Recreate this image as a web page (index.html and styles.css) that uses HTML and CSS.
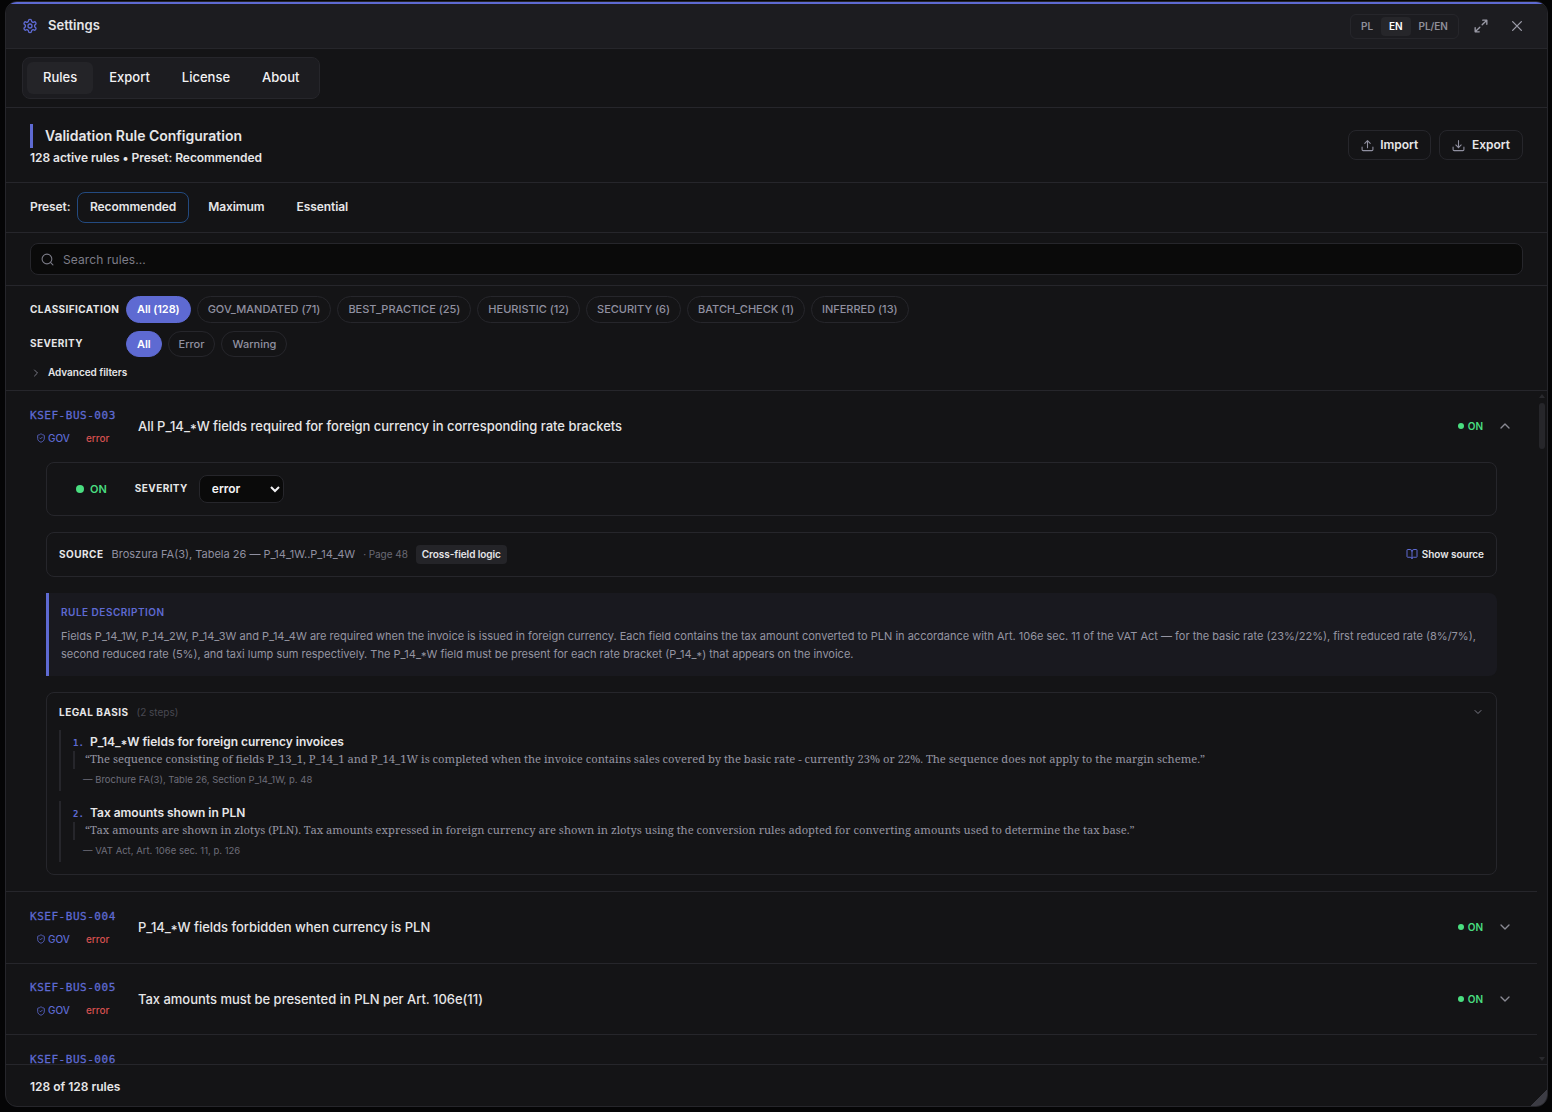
FILE: index.html
```html
<!DOCTYPE html>
<html lang="en">
<head>
    <meta charset="UTF-8">
    <meta name="viewport" content="width=device-width, initial-scale=1.0">
    <title>Settings</title>
    <link rel="stylesheet" href="styles.css">
</head>
<body>
<svg class="sprite" aria-hidden="true">
    <symbol id="shield" viewBox="0 0 24 24">
        <path d="M20 13c0 5-3.500 7.500-7.700 9a1 1 0 0 1-.7 0C7.500 20.500 4 18 4 13V6a1 1 0 0 1 1-1c2 0 4.500-1.200 6.200-2.700a1.200 1.200 0 0 1 1.500 0C14.500 3.800 17 5 19 5a1 1 0 0 1 1 1z"/>
        <path d="m9 12 2 2 4-4"/>
    </symbol>
    <symbol id="chevron" viewBox="0 0 24 24">
        <path d="m6 9 6 6 6-6"/>
    </symbol>
</svg>

<div class="window">
    <div class="header">
        <svg class="icon gear" viewBox="0 0 24 24">
            <path d="M12.220 2h-.44a2 2 0 0 0-2 2v.18a2 2 0 0 1-1 1.730l-.43.25a2 2 0 0 1-2 0l-.15-.08a2 2 0 0 0-2.730.730l-.22.38a2 2 0 0 0 .73 2.730l.15.1a2 2 0 0 1 1 1.720v.51a2 2 0 0 1-1 1.740l-.15.09a2 2 0 0 0-.73 2.730l.22.38a2 2 0 0 0 2.730.730l.15-.08a2 2 0 0 1 2 0l.43.25a2 2 0 0 1 1 1.730V20a2 2 0 0 0 2 2h.44a2 2 0 0 0 2-2v-.18a2 2 0 0 1 1-1.730l.43-.25a2 2 0 0 1 2 0l.15.08a2 2 0 0 0 2.730-.73l.22-.39a2 2 0 0 0-.73-2.730l-.15-.08a2 2 0 0 1-1-1.740v-.5a2 2 0 0 1 1-1.740l.15-.09a2 2 0 0 0 .73-2.730l-.22-.38a2 2 0 0 0-2.730-.73l-.15.08a2 2 0 0 1-2 0l-.43-.25a2 2 0 0 1-1-1.730V4a2 2 0 0 0-2-2z"/>
            <circle cx="12" cy="12" r="3"/>
        </svg>
        <h1>Settings</h1>
        <div class="lang-switch">
            <button>PL</button>
            <button class="active">EN</button>
            <button>PL/EN</button>
        </div>
        <button class="icon-btn" aria-label="Maximize">
            <svg class="icon" viewBox="0 0 24 24"><path d="M15 2h7v7M22 2l-8 8M9 22H2v-7M2 22l8-8"/></svg>
        </button>
        <button class="icon-btn" aria-label="Close">
            <svg class="icon" viewBox="0 0 24 24"><path d="M4.500 4.500l15 15M19.500 4.500l-15 15"/></svg>
        </button>
    </div>

    <div class="tabs-bar">
        <div class="tabs">
            <button class="active">Rules</button>
            <button>Export</button>
            <button>License</button>
            <button>About</button>
        </div>
    </div>

    <div class="config-header">
        <div class="config-title">
            <h2>Validation Rule Configuration</h2>
            <p>128 active rules • Preset: Recommended</p>
        </div>
        <button class="action-btn">
            <svg class="icon" viewBox="0 0 24 24"><path d="M2 15v4.500a2 2 0 0 0 2 2h16a2 2 0 0 0 2-2V15M12 16V3M7 8l5-5 5 5"/></svg>
            Import
        </button>
        <button class="action-btn">
            <svg class="icon" viewBox="0 0 24 24"><path d="M2 15v4.500a2 2 0 0 0 2 2h16a2 2 0 0 0 2-2V15M12 3v13M7 11l5 5 5-5"/></svg>
            Export
        </button>
    </div>

    <div class="preset-bar">
        <span>Preset:</span>
        <button class="active">Recommended</button>
        <button>Maximum</button>
        <button>Essential</button>
    </div>

    <div class="search-bar">
        <label class="search-box">
            <svg class="icon" viewBox="0 0 24 24"><circle cx="11" cy="11" r="9"/><path d="m22 22-4.500-4.500"/></svg>
            <input type="text" placeholder="Search rules...">
        </label>
    </div>

    <div class="filters">
        <div class="filter-row">
            <span class="label">CLASSIFICATION</span>
            <button class="pill active">All (128)</button>
            <button class="pill">GOV_MANDATED (71)</button>
            <button class="pill">BEST_PRACTICE (25)</button>
            <button class="pill">HEURISTIC (12)</button>
            <button class="pill">SECURITY (6)</button>
            <button class="pill">BATCH_CHECK (1)</button>
            <button class="pill">INFERRED (13)</button>
        </div>
        <div class="filter-row severity">
            <span class="label">SEVERITY</span>
            <button class="pill active">All</button>
            <button class="pill">Error</button>
            <button class="pill">Warning</button>
        </div>
        <div class="advanced">
            <svg class="icon" viewBox="0 0 24 24"><path d="m9 6 6 6-6 6"/></svg>
            Advanced filters
        </div>
    </div>

    <div class="list-wrap">
        <div class="rule-list">
            <div class="rule">
                <div class="rule-head">
                    <div class="rule-meta">
                        <div class="rule-id">KSEF-BUS-003</div>
                        <div class="badges"><svg class="icon"><use href="#shield"/></svg><span class="gov">GOV</span><span class="error">error</span></div>
                    </div>
                    <div class="rule-title">All P_14_<span class="star">*</span>W fields required for foreign currency in corresponding rate brackets</div>
                    <div class="state">ON</div>
                    <svg class="icon chevron up"><use href="#chevron"/></svg>
                </div>
                <div class="rule-detail">
                    <div class="card controls">
                        <div class="state big">ON</div>
                        <span class="label">SEVERITY</span>
                        <select>
                            <option>error</option>
                            <option>warning</option>
                        </select>
                    </div>
                    <div class="card source">
                        <span class="label">SOURCE</span>
                        <span class="source-text">Broszura FA(3), Tabela 26 — P_14_1W..P_14_4W</span>
                        <span class="page">· Page 48</span>
                        <span class="chip">Cross-field logic</span>
                        <button class="show-source">
                            <svg class="icon" viewBox="0 0 24 24"><path d="M12 6v15M3 18.500a1 1 0 0 1-1-1V4a1 1 0 0 1 1-1h5a4 4 0 0 1 4 4 4 4 0 0 1 4-4h5a1 1 0 0 1 1 1v13.500a1 1 0 0 1-1 1h-6a3 3 0 0 0-3 3 3 3 0 0 0-3-3z"/></svg>
                            Show source
                        </button>
                    </div>
                    <div class="description">
                        <h3>RULE DESCRIPTION</h3>
                        <p>Fields P_14_1W, P_14_2W, P_14_3W and P_14_4W are required when the invoice is issued in foreign currency. Each field contains the tax amount converted to PLN in accordance with Art. 106e sec. 11 of the VAT Act — for the basic rate (23%/22%), first reduced rate (8%/7%), second reduced rate (5%), and taxi lump sum respectively. The P_14_<span class="star">*</span>W field must be present for each rate bracket (P_14_<span class="star">*</span>) that appears on the invoice.</p>
                    </div>
                    <div class="card legal">
                        <div class="legal-head">
                            <span class="label">LEGAL BASIS</span>
                            <span class="steps-count">(2 steps)</span>
                            <svg class="icon"><use href="#chevron"/></svg>
                        </div>
                        <div class="step">
                            <div class="step-title"><span class="num">1.</span>P_14_<span class="star">*</span>W fields for foreign currency invoices</div>
                            <blockquote>“The sequence consisting of fields P_13_1, P_14_1 and P_14_1W is completed when the invoice contains sales covered by the basic rate - currently 23% or 22%. The sequence does not apply to the margin scheme.”</blockquote>
                            <cite>— Brochure FA(3), Table 26, Section P_14_1W, p. 48</cite>
                        </div>
                        <div class="step">
                            <div class="step-title"><span class="num">2.</span>Tax amounts shown in PLN</div>
                            <blockquote>“Tax amounts are shown in zlotys (PLN). Tax amounts expressed in foreign currency are shown in zlotys using the conversion rules adopted for converting amounts used to determine the tax base.”</blockquote>
                            <cite>— VAT Act, Art. 106e sec. 11, p. 126</cite>
                        </div>
                    </div>
                </div>
            </div>

            <div class="rule">
                <div class="rule-head">
                    <div class="rule-meta">
                        <div class="rule-id">KSEF-BUS-004</div>
                        <div class="badges"><svg class="icon"><use href="#shield"/></svg><span class="gov">GOV</span><span class="error">error</span></div>
                    </div>
                    <div class="rule-title">P_14_<span class="star">*</span>W fields forbidden when currency is PLN</div>
                    <div class="state">ON</div>
                    <svg class="icon chevron"><use href="#chevron"/></svg>
                </div>
            </div>

            <div class="rule">
                <div class="rule-head">
                    <div class="rule-meta">
                        <div class="rule-id">KSEF-BUS-005</div>
                        <div class="badges"><svg class="icon"><use href="#shield"/></svg><span class="gov">GOV</span><span class="error">error</span></div>
                    </div>
                    <div class="rule-title">Tax amounts must be presented in PLN per Art. 106e(11)</div>
                    <div class="state">ON</div>
                    <svg class="icon chevron"><use href="#chevron"/></svg>
                </div>
            </div>

            <div class="rule">
                <div class="rule-head">
                    <div class="rule-meta">
                        <div class="rule-id">KSEF-BUS-006</div>
                    </div>
                </div>
            </div>
        </div>
        <div class="scrollbar">
            <div class="arrow-up"></div>
            <div class="thumb"></div>
            <div class="arrow-down"></div>
        </div>
    </div>

    <div class="footer">128 of 128 rules</div>
    <div class="resize-handle"></div>
</div>
</body>
</html>
```
FILE: styles.css
```css
* {
    margin: 0;
    padding: 0;
    box-sizing: border-box;
}
body {
    height: 1112px;
    padding: 1px 4px 5px 5px;
    background: #050506;
    font-family: Inter, sans-serif;
    font-size: 12px;
    color: #e6e6e8;
    overflow: hidden;
}
button {
    background: none;
    border: none;
    font: inherit;
    color: inherit;
    cursor: pointer;
}
.sprite {
    display: none;
}
.icon {
    width: 14px;
    height: 14px;
    flex: none;
    fill: none;
    stroke: currentColor;
    stroke-width: 2;
    stroke-linecap: round;
    stroke-linejoin: round;
}
/* asterisk sits at mid height in field names */
.star {
    line-height: 0;
    vertical-align: -0.22em;
}
.window {
    position: relative;
    height: 1106px;
    display: flex;
    flex-direction: column;
    background: #141416;
    border: 1px solid #26262b;
    border-radius: 12px;
    overflow: hidden;
}

/* header */
.header {
    height: 47px;
    flex: none;
    display: flex;
    align-items: center;
    padding: 0 19px 0 16px;
    background: #1c1c20;
    border-top: 2px solid #5e6ad2;
    border-bottom: 1px solid #26262b;
}
.gear {
    color: #5e6ad2;
    width: 16px;
    height: 16px;
}
.header h1 {
    flex: 1;
    margin-left: 10px;
    padding-bottom: 2px;
    font-size: 13px;
    font-weight: 600;
    letter-spacing: 0.05px;
}
.lang-switch {
    display: flex;
    width: 109px;
    height: 25px;
    padding: 2px;
    border: 1px solid #26262b;
    border-radius: 6px;
    font-size: 10px;
    font-weight: 600;
    color: #8f8f9a;
}
.lang-switch button {
    padding: 0 8px;
    border-radius: 4px;
    letter-spacing: -0.05px;
}
.lang-switch .active {
    background: #26262a;
    color: #fff;
}
.icon-btn {
    display: flex;
    width: 22px;
    justify-content: center;
    margin-left: 11px;
    color: #9a9aa6;
}
.icon-btn .icon {
    stroke-width: 2.3;
}
.icon-btn + .icon-btn {
    margin-left: 14px;
}

/* tabs */
.tabs-bar {
    flex: none;
    padding: 8px 16px;
    border-bottom: 1px solid #26262b;
}
.tabs {
    width: 298px;
    height: 42px;
    display: flex;
    padding: 4px;
    background: #1c1c20;
    border: 1px solid #26262b;
    border-radius: 8px;
}
.tabs button {
    padding: 0 16px 2px;
    border-radius: 6px;
    font-size: 13px;
    font-weight: 500;
    color: #f2f2f4;
}
.tabs .active {
    background: #242428;
}

.config-header {
    height: 75px;
    flex: none;
    display: flex;
    align-items: center;
    gap: 8px;
    padding: 0 24px;
    border-bottom: 1px solid #26262b;
}
.config-title {
    flex: 1;
}
.config-title h2 {
    padding-left: 12px;
    border-left: 3px solid #5e6ad2;
    font-size: 14px;
    font-weight: 600;
    line-height: 24px;
}
.config-title p {
    margin: 1px 0 -1px;
    font-weight: 600;
    line-height: 18px;
    letter-spacing: -0.05px;
}
.action-btn {
    height: 30px;
    display: flex;
    align-items: center;
    gap: 6px;
    padding: 0 12px 1px;
    border: 1px solid #26262b;
    border-radius: 8px;
    font-weight: 600;
}
.action-btn .icon {
    width: 13px;
    height: 13px;
    margin: 1px 0.6px 0 0;
    color: #9090a0;
}

.preset-bar {
    height: 50px;
    flex: none;
    display: flex;
    align-items: center;
    gap: 6px;
    padding: 0 24px;
    border-bottom: 1px solid #26262b;
    font-weight: 600;
    letter-spacing: -0.08px;
}
.preset-bar span {
    padding: 0 0.4px 2px 0;
}
.preset-bar button {
    height: 31px;
    padding: 0 12px 2px;
    border: 1px solid transparent;
    border-radius: 8px;
    letter-spacing: -0.08px;
}
.preset-bar .active {
    border-color: #234a80;
}

.search-bar {
    flex: none;
    padding: 10px 24px;
    border-bottom: 1px solid #26262b;
}
.search-box {
    height: 32px;
    display: flex;
    align-items: center;
    gap: 9.5px;
    padding: 0 9.5px;
    background: #0a0a0a;
    border: 1px solid #26262b;
    border-radius: 8px;
    color: #7a7a86;
}
.search-box .icon {
    width: 13px;
    height: 13px;
}
.search-box input {
    flex: 1;
    background: none;
    border: none;
    outline: none;
    font: 12px Inter, sans-serif;
    letter-spacing: 0.1px;
    color: #e6e6e8;
}
.search-box input::placeholder {
    color: #7c7c88;
}

/* filters */
.filters {
    height: 105px;
    flex: none;
    display: flex;
    flex-direction: column;
    gap: 8px;
    padding: 10px 24px;
    border-bottom: 1px solid #26262b;
}
.filter-row {
    height: 27px;
    display: flex;
    gap: 6px;
}
.filter-row.severity {
    height: 26px;
}
.label {
    font-size: 10px;
    font-weight: 700;
    letter-spacing: 0.42px;
}
.filter-row .label {
    width: 90px;
    align-self: center;
    padding-bottom: 2px;
}
.pill {
    padding: 0 10px 1px;
    border: 1px solid #26262b;
    border-radius: 14px;
    font-size: 11px;
    font-weight: 500;
    letter-spacing: -0.01px;
    color: #9090a0;
}
.severity .pill {
    padding-bottom: 0;
}
.pill.active {
    background: #5e6ad2;
    border-color: #5e6ad2;
    color: #fff;
    font-weight: 600;
    letter-spacing: -0.07px;
}
.advanced {
    display: flex;
    align-items: center;
    gap: 6px;
    line-height: 15px;
    font-size: 10px;
    font-weight: 600;
    letter-spacing: -0.04px;
}
.advanced .icon {
    width: 12px;
    height: 12px;
    color: #7a7a86;
}

/* rule list */
.list-wrap {
    flex: 1;
    min-height: 0;
    display: flex;
}
.rule-list {
    flex: 1;
    overflow: hidden;
}
.rule {
    border-bottom: 1px solid #26262b;
}
.rule-head {
    height: 70.5px;
    display: flex;
    align-items: center;
    padding: 0 24px;
}
.rule-meta {
    width: 108px;
    height: 39px;
}
.rule-id {
    padding-top: 1px;
    font: 11px/16px "DejaVu Sans Mono", monospace;
    letter-spacing: 0.53px;
    color: #5e6ad2;
    -webkit-text-stroke: 0.3px #5e6ad2;
}
.badges {
    display: flex;
    align-items: center;
    margin-top: 7px;
    padding-left: 6px;
    font-size: 10px;
    font-weight: 500;
    line-height: 15px;
    color: #5e6ad2;
}
.badges .icon {
    width: 10px;
    height: 10px;
    margin-right: 2px;
}
.badges .error {
    margin-left: 16px;
    color: #d4504f;
}
.rule-title {
    flex: 1;
    font-size: 13px;
    font-weight: 500;
    letter-spacing: -0.03px;
}
.state {
    display: flex;
    align-items: center;
    gap: 4px;
    font-size: 10px;
    font-weight: 600;
    color: #4ade80;
}
.state::before {
    content: "";
    width: 6px;
    height: 6px;
    border-radius: 50%;
    background: #4ade80;
}
.state.big {
    gap: 6px;
    margin: 0 28px 0 17px;
    font-size: 11px;
}
.state.big::before {
    width: 8px;
    height: 8px;
}
.chevron {
    width: 16px;
    height: 16px;
    margin-left: 14px;
    color: #8a8a94;
}
.chevron.up {
    transform: rotate(180deg);
}
.rule-detail {
    display: flex;
    flex-direction: column;
    gap: 16px;
    padding: 0.5px 40px 16px;
}
.card {
    border: 1px solid #26262b;
    border-radius: 8px;
    padding: 0 12px;
}
.controls {
    height: 54px;
    display: flex;
    align-items: center;
}
.controls .label {
    padding-bottom: 2px;
}
.controls select {
    width: 85px;
    height: 28px;
    margin-left: 11px;
    padding: 0 0 1px 8px;
    background: #0a0a0a;
    border: 1px solid #26262b;
    border-radius: 8px;
    font: 600 12px Inter, sans-serif;
    color: #f2f2f4;
}
.source {
    height: 45px;
    display: flex;
    align-items: center;
    gap: 8px;
    padding-bottom: 1px;
}
.source .label,
.legal .label {
    letter-spacing: 0.48px;
}
.source-text {
    font-size: 11px;
    color: #9090a0;
}
.page {
    font-size: 10px;
    letter-spacing: -0.05px;
    color: #6a6a75;
}
.chip {
    padding: 0 6px;
    background: #242428;
    border-radius: 4px;
    font-size: 10px;
    font-weight: 600;
    line-height: 19px;
    letter-spacing: -0.06px;
}
.show-source {
    display: flex;
    align-items: center;
    gap: 4px;
    margin-left: auto;
    font-size: 10px;
    font-weight: 600;
    letter-spacing: -0.04px;
}
.show-source .icon {
    width: 12px;
    height: 12px;
    color: #5e6ad2;
}
.description {
    height: 83px;
    padding: 12px;
    background: #19191f;
    border-left: 3px solid #5e6ad2;
    border-radius: 0 8px 8px 0;
}
.description h3 {
    margin-bottom: 7px;
    font-size: 10px;
    font-weight: 600;
    line-height: 15px;
    letter-spacing: 0.5px;
    color: #5e6ad2;
}
.description p {
    font-size: 11px;
    line-height: 18px;
    color: #9595a2;
}
.legal {
    height: 183px;
    padding: 12px;
}
.legal-head {
    display: flex;
    align-items: center;
    gap: 8px;
    height: 13px;
    margin-bottom: 12px;
}
.steps-count {
    font-size: 10px;
    color: #484851;
}
.legal-head .icon {
    width: 12px;
    height: 12px;
    margin-left: auto;
    color: #7a7a86;
}
.step {
    height: 61px;
    margin-bottom: 10px;
    padding: 3px 0 4px 12px;
    border-left: 2px solid #26262b;
}
.step-title {
    font-weight: 600;
    line-height: 17px;
    letter-spacing: -0.02px;
}
.num {
    display: inline-block;
    width: 17px;
    font: bold 9px/12px "DejaVu Sans Mono", monospace;
    color: #5e6ad2;
}
.step blockquote {
    margin-top: 1px;
    padding: 0 0 2px 10px;
    border-left: 2px solid #26262b;
    font: 11.2px/16px "Noto Serif", "Liberation Serif", serif;
    color: #9595a2;
}
.step cite {
    display: block;
    margin: 4px 0 0 10px;
    font-size: 9.5px;
    font-style: normal;
    line-height: 14px;
    color: #6e6e7a;
}

/* scrollbar */
.scrollbar {
    width: 10px;
    display: flex;
    flex-direction: column;
    align-items: center;
    padding: 3px 0;
}
.arrow-up,
.arrow-down {
    width: 6px;
    height: 4px;
    background: #2a2a2e;
    clip-path: polygon(50% 0, 100% 100%, 0 100%);
}
.arrow-down {
    margin-top: auto;
    clip-path: polygon(0 0, 100% 0, 50% 100%);
}
.thumb {
    width: 6px;
    height: 46px;
    margin-top: 5px;
    background: #26262a;
    border-radius: 3px;
}

.footer {
    height: 42px;
    flex: none;
    padding: 0 24px;
    border-top: 1px solid #26262b;
    font-weight: 600;
    line-height: 43px;
}
.resize-handle {
    position: absolute;
    right: 0;
    bottom: 0;
    width: 16px;
    height: 16px;
    background: linear-gradient(135deg, transparent 50%, #3c3c44 50%);
}
```
